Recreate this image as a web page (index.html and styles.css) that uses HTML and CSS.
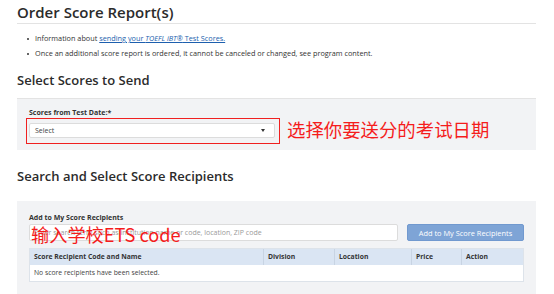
FILE: index.html
```html
<!DOCTYPE html>
<html lang="en">
<head>
<meta charset="utf-8">
<title>Order Score Report(s)</title>
<link rel="stylesheet" href="styles.css">
</head>
<body>
<div class="page">
  <h1 class="page-title">Order Score Report(s)</h1>
  <ul class="notes">
    <li>Information about <a href="#" class="link">sending your <i>TOEFL iBT®</i> Test Scores.</a></li>
    <li>Once an additional score report is ordered, it cannot be canceled or changed, see program content.</li>
  </ul>

  <h2 class="section-title with-rule">Select Scores to Send</h2>
  <div class="panel panel-date">
    <div class="field-label">Scores from Test Date:<span class="req">*</span></div>
    <div class="select">
      <span>Select</span>
      <span class="caret"></span>
    </div>
    <div class="mark-box"></div>
    <div class="mark-text mark-date">选择你要送分的考试日期</div>
  </div>

  <h2 class="section-title">Search and Select Score Recipients</h2>
  <div class="panel panel-recip">
    <div class="field-label">Add to My Score Recipients</div>
    <div class="search-row">
      <div class="search-input">Enter search term such as institution name or code, location, ZIP code</div>
      <button class="btn-add">Add to My Score Recipients</button>
    </div>
    <div class="table">
      <div class="tr thead">
        <div class="td c1">Score Recipient Code and Name</div>
        <div class="td c2">Division</div>
        <div class="td c3">Location</div>
        <div class="td c4">Price</div>
        <div class="td c5">Action</div>
      </div>
      <div class="tr tbody">
        <div class="td full">No score recipients have been selected.</div>
      </div>
    </div>
    <div class="mark-text mark-code">输入学校ETS code</div>
  </div>
</div>
</body>
</html>
```

FILE: styles.css
```css
* { box-sizing: border-box; }
html, body {
  margin: 0;
  padding: 0;
  background: #ffffff;
}
body {
  font-family: "Open Sans", "Noto Sans", sans-serif;
  color: #333333;
}
.page {
  margin-left: 17px;
  width: 519px;
}
.page-title {
  margin: 0;
  padding-top: 1px;
  font-size: 15px;
  line-height: 22px;
  font-weight: 600;
  color: #2b2b2b;
  border-bottom: 1px solid #e3e3e3;
}
.notes {
  list-style: none;
  margin: 7px 0 0 0;
  padding: 0 0 0 18px;
}
.notes li {
  position: relative;
  font-size: 7.3px;
  line-height: 15px;
  color: #333;
}
.notes li::before {
  content: "";
  position: absolute;
  left: -8px;
  top: 7px;
  width: 2px;
  height: 2px;
  border-radius: 50%;
  background: #333;
}
.link {
  color: #1d5fae;
  text-decoration: underline;
}
.section-title {
  margin: 9px 0 0 0;
  font-size: 13px;
  line-height: 20px;
  font-weight: 600;
  color: #2b2b2b;
}
.section-title.with-rule {
  padding-bottom: 8px;
  border-bottom: 1px solid #e3e3e3;
}
.panel {
  position: relative;
  background: #f2f3f5;
  padding: 9px 12px 12px 12px;
}
.field-label {
  font-size: 7px;
  line-height: 10px;
  font-weight: 700;
  color: #333;
}
.req { color: #333; }
.select {
  margin-top: 5px;
  width: 246px;
  height: 15px;
  background: #fff;
  border: 1px solid #dcdcdc;
  border-radius: 2px;
  display: flex;
  align-items: center;
  justify-content: space-between;
  padding: 0 9px 0 5px;
  font-size: 7px;
  color: #444;
}
.caret {
  width: 0;
  height: 0;
  border-left: 2px solid transparent;
  border-right: 2px solid transparent;
  border-top: 3px solid #333;
}
.mark-box {
  position: absolute;
  left: 9px;
  top: 19px;
  width: 254px;
  height: 26px;
  border: 1.5px solid #f02020;
}
.mark-text {
  position: absolute;
  font-family: "Noto Sans CJK SC", "Noto Sans", sans-serif;
  font-size: 18.4px;
  line-height: 20px;
  color: #f51c1c;
  white-space: nowrap;
}
.mark-date {
  left: 270px;
  top: 20px;
}
.panel-date + .section-title {
  margin-top: 16px;
  margin-bottom: 15px;
}
.panel-recip {
  padding-top: 12px;
}
.search-row {
  margin-top: 1px;
  display: flex;
  gap: 9px;
}
.search-input {
  width: 369px;
  height: 17px;
  background: #fff;
  border: 1px solid #dcdcdc;
  border-radius: 2px;
  padding: 0 4px;
  font-size: 7px;
  line-height: 15px;
  color: #9a9a9a;
  white-space: nowrap;
  overflow: hidden;
}
.btn-add {
  width: 117px;
  height: 17px;
  border: 1px solid #7199cf;
  border-radius: 2px;
  background: #7ea4d6;
  color: #fff;
  font-family: "Open Sans", sans-serif;
  font-size: 7.4px;
  padding: 0;
}
.table {
  margin-top: 7px;
  border: 1px solid #dde3ea;
}
.tr {
  display: flex;
  height: 16px;
}
.thead {
  background: #dae5f3;
}
.td {
  font-size: 6.8px;
  line-height: 15px;
  padding-left: 4px;
  white-space: nowrap;
}
.thead .td {
  font-weight: 700;
  color: #333;
  border-right: 1px solid #c8d4e3;
}
.thead .td:last-child { border-right: none; }
.c1 { width: 234px; }
.c2 { width: 71px; }
.c3 { width: 77px; }
.c4 { width: 50px; }
.c5 { flex: 1; }
.tbody {
  background: #fff;
}
.tbody .td {
  color: #444;
  flex: 1;
}
.mark-code {
  left: 14px;
  top: 23px;
  font-size: 18.2px;
}
```
